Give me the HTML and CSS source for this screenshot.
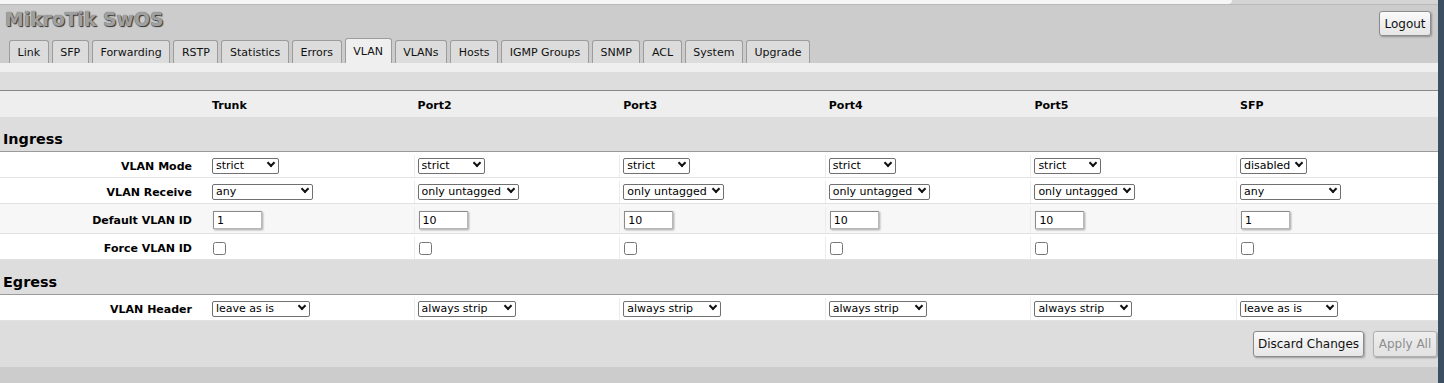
FILE: index.html
```html
<!DOCTYPE html>
<html>
<head>
<meta charset="utf-8">
<title>MikroTik SwOS</title>
<link rel="stylesheet" href="styles.css">
</head>
<body>
<div class="page">
  <div class="top"><div class="top-inner"></div></div>
  <header class="head">
    <div class="head-row">
      <div class="title">MikroTik SwOS</div>
      <button class="btn logout">Logout</button>
    </div>
    <nav class="tabs">
      <span class="tab">Link</span>
      <span class="tab">SFP</span>
      <span class="tab">Forwarding</span>
      <span class="tab">RSTP</span>
      <span class="tab">Statistics</span>
      <span class="tab">Errors</span>
      <span class="tab active">VLAN</span>
      <span class="tab">VLANs</span>
      <span class="tab">Hosts</span>
      <span class="tab">IGMP Groups</span>
      <span class="tab">SNMP</span>
      <span class="tab">ACL</span>
      <span class="tab">System</span>
      <span class="tab">Upgrade</span>
    </nav>
  </header>
  <div class="strip"></div>
  <div class="band"></div>

  <div class="grid">
    <div class="row hdr">
      <div class="lbl"></div>
      <div class="cell first">Trunk</div>
      <div class="cell">Port2</div>
      <div class="cell">Port3</div>
      <div class="cell">Port4</div>
      <div class="cell">Port5</div>
      <div class="cell">SFP</div>
    </div>

    <div class="section">Ingress</div>

    <div class="row">
      <div class="lbl">VLAN Mode</div>
      <div class="cell first"><span class="sel"><select class="sel-mode"><option>disabled</option><option>optional</option><option>enabled</option><option selected>strict</option></select></span></div>
      <div class="cell"><span class="sel"><select class="sel-mode"><option>disabled</option><option>optional</option><option>enabled</option><option selected>strict</option></select></span></div>
      <div class="cell"><span class="sel"><select class="sel-mode"><option>disabled</option><option>optional</option><option>enabled</option><option selected>strict</option></select></span></div>
      <div class="cell"><span class="sel"><select class="sel-mode"><option>disabled</option><option>optional</option><option>enabled</option><option selected>strict</option></select></span></div>
      <div class="cell"><span class="sel"><select class="sel-mode"><option>disabled</option><option>optional</option><option>enabled</option><option selected>strict</option></select></span></div>
      <div class="cell"><span class="sel"><select class="sel-mode"><option selected>disabled</option><option>optional</option><option>enabled</option><option>strict</option></select></span></div>
    </div>

    <div class="row">
      <div class="lbl">VLAN Receive</div>
      <div class="cell first"><span class="sel"><select class="sel-recv"><option selected>any</option><option>only tagged</option><option>only untagged</option></select></span></div>
      <div class="cell"><span class="sel"><select class="sel-recv"><option>any</option><option>only tagged</option><option selected>only untagged</option></select></span></div>
      <div class="cell"><span class="sel"><select class="sel-recv"><option>any</option><option>only tagged</option><option selected>only untagged</option></select></span></div>
      <div class="cell"><span class="sel"><select class="sel-recv"><option>any</option><option>only tagged</option><option selected>only untagged</option></select></span></div>
      <div class="cell"><span class="sel"><select class="sel-recv"><option>any</option><option>only tagged</option><option selected>only untagged</option></select></span></div>
      <div class="cell"><span class="sel"><select class="sel-recv"><option selected>any</option><option>only tagged</option><option>only untagged</option></select></span></div>
    </div>

    <div class="row tall alt">
      <div class="lbl">Default VLAN ID</div>
      <div class="cell first"><input class="num" type="text" value="1"></div>
      <div class="cell"><input class="num" type="text" value="10"></div>
      <div class="cell"><input class="num" type="text" value="10"></div>
      <div class="cell"><input class="num" type="text" value="10"></div>
      <div class="cell"><input class="num" type="text" value="10"></div>
      <div class="cell"><input class="num" type="text" value="1"></div>
    </div>

    <div class="row">
      <div class="lbl">Force VLAN ID</div>
      <div class="cell first"><input class="chk" type="checkbox"></div>
      <div class="cell"><input class="chk" type="checkbox"></div>
      <div class="cell"><input class="chk" type="checkbox"></div>
      <div class="cell"><input class="chk" type="checkbox"></div>
      <div class="cell"><input class="chk" type="checkbox"></div>
      <div class="cell"><input class="chk" type="checkbox"></div>
    </div>

    <div class="section">Egress</div>

    <div class="row">
      <div class="lbl">VLAN Header</div>
      <div class="cell first"><span class="sel"><select class="sel-hdr"><option selected>leave as is</option><option>always strip</option><option>add if missing</option></select></span></div>
      <div class="cell"><span class="sel"><select class="sel-hdr"><option>leave as is</option><option selected>always strip</option><option>add if missing</option></select></span></div>
      <div class="cell"><span class="sel"><select class="sel-hdr"><option>leave as is</option><option selected>always strip</option><option>add if missing</option></select></span></div>
      <div class="cell"><span class="sel"><select class="sel-hdr"><option>leave as is</option><option selected>always strip</option><option>add if missing</option></select></span></div>
      <div class="cell"><span class="sel"><select class="sel-hdr"><option>leave as is</option><option selected>always strip</option><option>add if missing</option></select></span></div>
      <div class="cell"><span class="sel"><select class="sel-hdr"><option selected>leave as is</option><option>always strip</option><option>add if missing</option></select></span></div>
    </div>
  </div>

  <div class="actions">
    <button class="btn discard">Discard Changes</button>
    <button class="btn apply" disabled>Apply All</button>
  </div>
  <div class="footer"></div>
</div>
</body>
</html>
```

FILE: styles.css
```css
*, *::before, *::after {
  box-sizing: border-box;
}
html {
  background: #3c4e62;
}
body {
  margin: 0;
  font-family: "DejaVu Sans", Verdana, sans-serif;
  font-size: 11px;
  color: #000;
}
.page {
  width: 1438px;
  height: 383px;
  background: #dddddd;
  overflow: hidden;
}
.top {
  height: 5px;
  background: #d4d4d4;
  border-bottom: 1px solid #b9b9b9;
}
.top-inner {
  width: 1232px;
  height: 4px;
  background: #f6f6f6;
  border-bottom-right-radius: 4px;
}
.head {
  height: 58px;
  background: #cccccc;
  display: flex;
  flex-direction: column;
}
.head-row {
  height: 33px;
  display: flex;
  justify-content: space-between;
  align-items: flex-start;
}
.title {
  margin: 3px 0 0 5px;
  font-size: 18.8px;
  line-height: 23px;
  font-weight: bold;
  color: #a0a0a0;
  text-shadow: 1px 1px 1px #333, 0 0 1px #555;
}
.btn {
  font-family: "DejaVu Sans", Verdana, sans-serif;
  font-size: 12px;
  color: #111;
  height: 26px;
  padding: 0;
  border: 1px solid #8c8c8c;
  border-radius: 3px;
  background: linear-gradient(#fafafa, #e6e6e6);
  box-shadow: 1px 1px 2px rgba(0, 0, 0, 0.3);
}
.btn:disabled {
  color: #8e8e8e;
  border-color: #b0b0b0;
  background: linear-gradient(#eeeeee, #e2e2e2);
}
.logout {
  margin: 6px 7px 0 0;
  height: 25px;
  width: 52px;
}
.discard {
  width: 111px;
}
.apply {
  width: 64px;
}
.tabs {
  height: 25px;
  display: flex;
  align-items: flex-end;
  gap: 3px;
  padding-left: 9px;
}
.tab {
  height: 23px;
  line-height: 23px;
  padding: 0 7.6px;
  border: 1px solid #9c9c9c;
  border-bottom: none;
  border-radius: 3px 3px 0 0;
  background: #dcdcdc;
  color: #111;
}
.tab.active {
  height: 25px;
  line-height: 26px;
  background: #efefef;
}
.strip {
  height: 9px;
  background: #efefef;
}
.band {
  height: 18px;
  background: #dddddd;
}
.grid {
  border-top: 1px solid #8a8a8a;
}
.row {
  display: grid;
  grid-template-columns: 208px repeat(5, 205.6px) 1fr;
  height: 26px;
  padding-top: 3px;
  border-bottom: 1px solid #e2e2e2;
  background: #ffffff;
}
.row.tall {
  height: 30px;
}
.row.alt {
  background: #f7f7f7;
}
.row.hdr {
  height: 26px;
  padding-top: 3px;
  border-bottom: none;
  background: #eeeeee;
  font-weight: bold;
}
.lbl {
  display: flex;
  align-items: center;
  justify-content: flex-end;
  padding-right: 16px;
  font-weight: bold;
}
.cell {
  display: flex;
  align-items: center;
  padding-left: 3px;
  border-left: 1px solid #ececec;
}
.cell.first {
  border-left-color: transparent;
}
.row.hdr .cell {
  border-left-color: transparent;
}
.section {
  height: 35px;
  padding: 13px 0 0 3px;
  background: #dddddd;
  border-bottom: 1px solid #9a9a9a;
  font-size: 14.4px;
  font-weight: bold;
  line-height: 18px;
}
.sel {
  position: relative;
  display: inline-flex;
}
.sel::after {
  content: "";
  position: absolute;
  right: 5px;
  top: 2px;
  width: 6px;
  height: 6px;
  border-right: 2px solid #111;
  border-bottom: 2px solid #111;
  transform: rotate(45deg);
  pointer-events: none;
}
select {
  -webkit-appearance: none;
  appearance: none;
  font-family: "DejaVu Sans", Verdana, sans-serif;
  font-size: 11px;
  height: 16px;
  margin: 0;
  padding: 0 16px 0 3px;
  border: 1px solid #707070;
  border-radius: 2px;
  background: #ffffff;
  color: #000;
  line-height: 14px;
}
.sel-mode {
  width: 67px;
}
.sel-recv {
  width: 101px;
}
.sel-hdr {
  width: 98px;
}
.num {
  font-family: "DejaVu Sans", Verdana, sans-serif;
  font-size: 11px;
  width: 49px;
  height: 18px;
  margin: 0 0 0 1px;
  padding: 0 3px;
  border: 1px solid #8a8a8a;
  border-right-color: #b8b8b8;
  border-bottom-color: #b8b8b8;
  box-shadow: 1px 1px 2px rgba(0, 0, 0, 0.35);
  background: #fff;
}
.chk {
  width: 13px;
  height: 13px;
  margin: 0 0 0 1px;
}
.actions {
  height: 46px;
  padding-top: 10px;
  padding-right: 1px;
  display: flex;
  justify-content: flex-end;
  align-items: flex-start;
  gap: 9px;
  background: #dddddd;
}
.footer {
  height: 16px;
  background: #cccccc;
}
```
